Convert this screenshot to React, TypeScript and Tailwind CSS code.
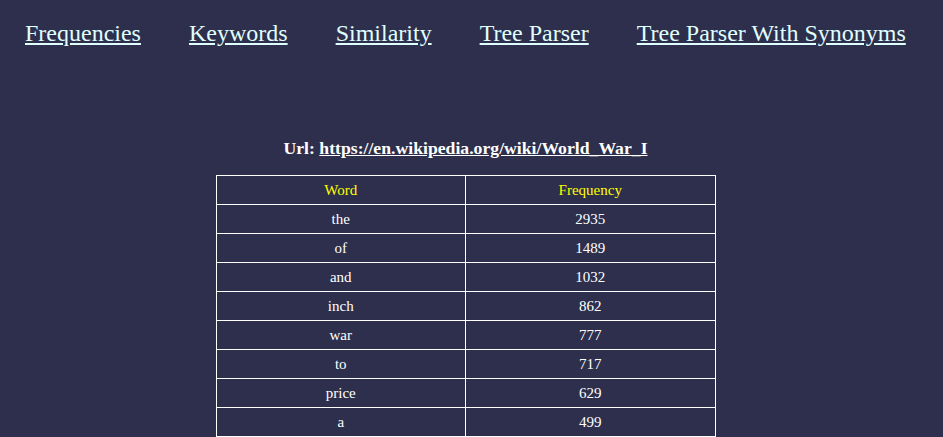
const rows: [string, number][] = [
  ["the", 2935],
  ["of", 1489],
  ["and", 1032],
  ["inch", 862],
  ["war", 777],
  ["to", 717],
  ["price", 629],
  ["a", 499],
];

const links = ["Frequencies", "Keywords", "Similarity", "Tree Parser", "Tree Parser With Synonyms"];

export default function App() {
  return (
    <div className="h-[437px] w-full overflow-hidden bg-[#2d2f4c] text-white font-['Liberation_Serif',serif]">
      <nav className="flex gap-[48px] pl-[25px] pt-[18px]">
        {links.map((l) => (
          <a key={l} href="#" className="text-[24px] leading-[30px] text-[#e0ffff] underline">
            {l}
          </a>
        ))}
      </nav>
      <div className="flex flex-col items-center pr-[12px] pt-[90px]">
        <p className="text-[17.7px] font-bold leading-[20px]">
          Url:{" "}
          <a href="#" className="underline">
            https://en.wikipedia.org/wiki/World_War_I
          </a>
        </p>
        <table className="mt-[17px] w-[500px] border-collapse text-[15px]">
          <thead>
            <tr>
              <th className="w-1/2 border border-white py-[5px] font-normal text-[#ffff00] leading-[18px]">Word</th>
              <th className="w-1/2 border border-white py-[5px] font-normal text-[#ffff00] leading-[18px]">Frequency</th>
            </tr>
          </thead>
          <tbody>
            {rows.map(([w, n]) => (
              <tr key={w}>
                <td className="border border-white py-[5px] text-center leading-[18px]">{w}</td>
                <td className="border border-white py-[5px] text-center leading-[18px]">{n}</td>
              </tr>
            ))}
          </tbody>
        </table>
      </div>
    </div>
  );
}
